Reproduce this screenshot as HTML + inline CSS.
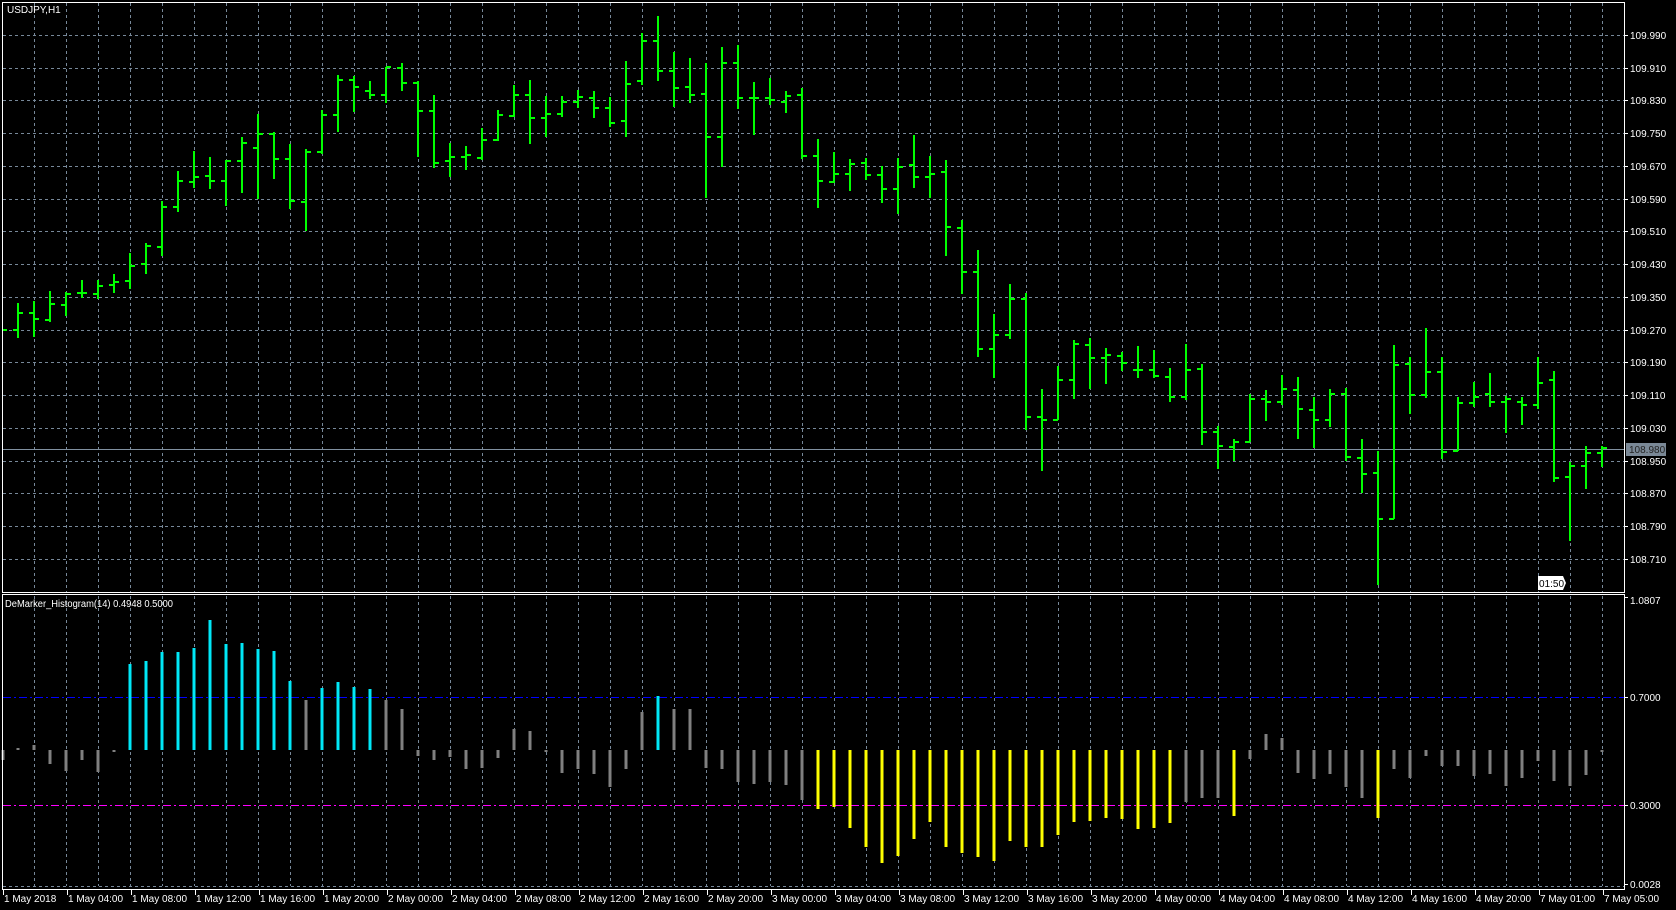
<!DOCTYPE html>
<html><head><meta charset="utf-8"><style>
html,body{margin:0;padding:0;background:#000;width:1676px;height:910px;overflow:hidden}
svg{display:block}
text{font-family:"Liberation Sans",sans-serif;font-size:10px;fill:#fff}
</style></head><body>
<svg width="1676" height="910" viewBox="0 0 1676 910" xmlns="http://www.w3.org/2000/svg">
<defs>
<pattern id="vg" x="0" y="0" width="32" height="910" patternUnits="userSpaceOnUse"></pattern>
</defs>
<!-- vertical grid -->
<g stroke="#778899" stroke-width="1" stroke-dasharray="3 3" shape-rendering="crispEdges">
<path d="M34.5 3V592M66.5 3V592M98.5 3V592M130.5 3V592M162.5 3V592M194.5 3V592M226.5 3V592M258.5 3V592M290.5 3V592M322.5 3V592M354.5 3V592M386.5 3V592M418.5 3V592M450.5 3V592M482.5 3V592M514.5 3V592M546.5 3V592M578.5 3V592M610.5 3V592M642.5 3V592M674.5 3V592M706.5 3V592M738.5 3V592M770.5 3V592M802.5 3V592M834.5 3V592M866.5 3V592M898.5 3V592M930.5 3V592M962.5 3V592M994.5 3V592M1026.5 3V592M1058.5 3V592M1090.5 3V592M1122.5 3V592M1154.5 3V592M1186.5 3V592M1218.5 3V592M1250.5 3V592M1282.5 3V592M1314.5 3V592M1346.5 3V592M1378.5 3V592M1410.5 3V592M1442.5 3V592M1474.5 3V592M1506.5 3V592M1538.5 3V592M1570.5 3V592M1602.5 3V592"/>
<path d="M34.5 596V886M66.5 596V886M98.5 596V886M130.5 596V886M162.5 596V886M194.5 596V886M226.5 596V886M258.5 596V886M290.5 596V886M322.5 596V886M354.5 596V886M386.5 596V886M418.5 596V886M450.5 596V886M482.5 596V886M514.5 596V886M546.5 596V886M578.5 596V886M610.5 596V886M642.5 596V886M674.5 596V886M706.5 596V886M738.5 596V886M770.5 596V886M802.5 596V886M834.5 596V886M866.5 596V886M898.5 596V886M930.5 596V886M962.5 596V886M994.5 596V886M1026.5 596V886M1058.5 596V886M1090.5 596V886M1122.5 596V886M1154.5 596V886M1186.5 596V886M1218.5 596V886M1250.5 596V886M1282.5 596V886M1314.5 596V886M1346.5 596V886M1378.5 596V886M1410.5 596V886M1442.5 596V886M1474.5 596V886M1506.5 596V886M1538.5 596V886M1570.5 596V886M1602.5 596V886"/>
<path d="M3 35.5H1624M3 68.5H1624M3 100.5H1624M3 133.5H1624M3 166.5H1624M3 199.5H1624M3 231.5H1624M3 264.5H1624M3 297.5H1624M3 330.5H1624M3 362.5H1624M3 395.5H1624M3 428.5H1624M3 461.5H1624M3 493.5H1624M3 526.5H1624M3 559.5H1624M3 886.5H1624"/>
</g>
<!-- current price line -->
<path d="M3 449.5H1624" stroke="#8090a0" stroke-width="1" shape-rendering="crispEdges"/>
<!-- OHLC bars -->
<g stroke="#00ff00" stroke-width="2" fill="none" shape-rendering="crispEdges">
<path d="M2 330H7
M18 303V338M13 330H18M18 313H23
M34 301V337M29 313H34M34 319H39
M50 291V322M45 320H50M50 304H55
M66 292V316M61 305H66M66 294H71
M82 280V298M77 293H82M82 293H87
M98 280V299M93 294H98M98 286H103
M114 274V293M109 285H114M114 282H119
M130 253V289M125 281H130M130 266H135
M146 243V274M141 264H146M146 246H151
M162 201V256M157 247H162M162 207H167
M178 171V212M173 207H178M178 181H183
M194 151V188M189 182H194M194 177H199
M210 157V189M205 176H210M210 181H215
M226 160V206M221 181H226M226 161H231
M242 137V193M237 161H242M242 143H247
M258 114V199M253 148H258M258 134H263
M274 132V179M269 134H274M274 159H279
M290 144V209M285 159H290M290 201H295
M306 149V231M301 202H306M306 152H311
M322 110V154M317 152H322M322 115H327
M338 75V132M333 115H338M338 80H343
M354 76V112M349 80H354M354 87H359
M370 81V99M365 91H370M370 95H375
M386 67V103M381 95H386M386 67H391
M402 63V91M397 68H402M402 83H407
M418 81V157M413 83H418M418 111H423
M434 95V168M429 111H434M434 163H439
M450 143V177M445 161H450M450 157H455
M466 146V170M461 157H466M466 155H471
M482 128V160M477 158H482M482 140H487
M498 110V141M493 140H498M498 115H503
M514 85V117M509 116H514M514 95H519
M530 80V144M525 95H530M530 118H535
M546 96V137M541 118H546M546 114H551
M562 96V117M557 114H562M562 102H567
M578 90V108M573 102H578M578 97H583
M594 91V118M589 98H594M594 108H599
M610 97V127M605 108H610M610 123H615
M626 61V137M621 121H626M626 84H631
M642 33V85M637 81H642M642 41H647
M658 16V81M653 41H658M658 71H663
M674 52V107M669 71H674M674 88H679
M690 58V103M685 87H690M690 95H695
M706 63V198M701 94H706M706 137H711
M722 47V167M717 137H722M722 63H727
M738 45V109M733 63H738M738 98H743
M754 82V135M749 98H754M754 98H759
M770 78V105M765 98H770M770 100H775
M786 91V113M781 102H786M786 96H791
M802 88V159M797 95H802M802 156H807
M818 139V208M813 156H818M818 181H823
M834 152V183M829 182H834M834 174H839
M850 159V191M845 174H850M850 164H855
M866 158V180M861 163H866M866 175H871
M882 166V203M877 175H882M882 189H887
M898 158V214M893 189H898M898 167H903
M914 135V188M909 165H914M914 177H919
M930 156V198M925 177H930M930 174H935
M946 160V256M941 172H946M946 227H951
M962 220V294M957 228H962M962 272H967
M978 250V357M973 272H978M978 349H983
M994 314V378M989 349H994M994 335H999
M1010 284V339M1005 335H1010M1010 299H1015
M1026 293V430M1021 299H1026M1026 417H1031
M1042 389V471M1037 417H1042M1042 420H1047
M1058 366V420M1053 420H1058M1058 380H1063
M1074 340V399M1069 380H1074M1074 344H1079
M1090 338V389M1085 345H1090M1090 358H1095
M1106 348V384M1101 358H1106M1106 355H1111
M1122 352V371M1117 356H1122M1122 363H1127
M1138 346V378M1133 370H1138M1138 370H1143
M1154 350V378M1149 370H1154M1154 376H1159
M1170 368V402M1165 377H1170M1170 397H1175
M1186 344V400M1181 397H1186M1186 370H1191
M1202 364V445M1197 369H1202M1202 432H1207
M1218 426V469M1213 432H1218M1218 446H1223
M1234 439V461M1229 447H1234M1234 442H1239
M1250 394V442M1245 442H1250M1250 399H1255
M1266 390V421M1261 399H1266M1266 402H1271
M1282 375V405M1277 402H1282M1282 389H1287
M1298 377V439M1293 390H1298M1298 409H1303
M1314 397V448M1309 410H1314M1314 420H1319
M1330 389V427M1325 420H1330M1330 394H1335
M1346 388V461M1341 394H1346M1346 457H1351
M1362 439V493M1357 458H1362M1362 474H1367
M1378 451V585M1373 473H1378M1378 519H1383
M1394 345V519M1389 519H1394M1394 365H1399
M1410 357V414M1405 364H1410M1410 395H1415
M1426 328V398M1421 395H1426M1426 372H1431
M1442 357V459M1437 372H1442M1442 452H1447
M1458 397V451M1453 451H1458M1458 403H1463
M1474 382V407M1469 403H1474M1474 397H1479
M1490 373V407M1485 394H1490M1490 402H1495
M1506 396V433M1501 402H1506M1506 399H1511
M1522 397V425M1517 402H1522M1522 405H1527
M1538 357V409M1533 405H1538M1538 383H1543
M1554 371V482M1549 380H1554M1554 478H1559
M1570 462V541M1565 477H1570M1570 466H1575
M1586 446V489M1581 466H1586M1586 453H1591
M1602 446V467M1597 453H1602M1602 448H1607"/>
</g>
<!-- levels -->
<path d="M3 697.5H1624" stroke="#0000ff" stroke-width="1" stroke-dasharray="8 3 2 3" shape-rendering="crispEdges"/>
<path d="M3 805.5H1624" stroke="#ff00ff" stroke-width="1" stroke-dasharray="8 3 2 3" shape-rendering="crispEdges"/>
<!-- histogram -->
<g stroke-width="3" fill="none" shape-rendering="crispEdges">
<path stroke="#808080" d="M3 750V760M18 750V748M34 750V745M50 750V764M66 750V771M82 750V760M98 750V772M114 750V752M306 750V700M386 750V700M402 750V709M418 750V756M434 750V760M450 750V757M466 750V769M482 750V768M498 750V758M514 750V729M530 750V731M546 750V752M562 750V773M578 750V769M594 750V774M610 750V787M626 750V769M642 750V712M674 750V709M690 750V709M706 750V768M722 750V769M738 750V782M754 750V784M770 750V782M786 750V785M802 750V800M1186 750V802M1202 750V798M1218 750V798M1250 750V759M1266 750V734M1282 750V738M1298 750V773M1314 750V779M1330 750V774M1346 750V787M1362 750V798M1394 750V769M1410 750V778M1426 750V756M1442 750V766M1458 750V766M1474 750V776M1490 750V774M1506 750V786M1522 750V778M1538 750V761M1554 750V781M1570 750V786M1586 750V775M1602 750V752"/>
<path stroke="#00e8f8" d="M130 750V664M146 750V661M162 750V652M178 750V652M194 750V648M210 750V620M226 750V644M242 750V643M258 750V649M274 750V651M290 750V681M322 750V688M338 750V682M354 750V687M370 750V689M658 750V696"/>
<path stroke="#ffff00" d="M818 750V809M834 750V807M850 750V828M866 750V847M882 750V863M898 750V856M914 750V839M930 750V822M946 750V847M962 750V853M978 750V857M994 750V861M1010 750V841M1026 750V847M1042 750V847M1058 750V835M1074 750V822M1090 750V821M1106 750V818M1122 750V819M1138 750V829M1154 750V828M1170 750V823M1234 750V816M1378 750V818"/>
</g>
<!-- borders -->
<g stroke="#ffffff" stroke-width="1" fill="none" shape-rendering="crispEdges">
<path d="M2.5 2.5H1624.5V592.5H2.5Z"/>
<path d="M2.5 594.5H1624.5V889.5H2.5Z"/>
<path d="M1624 35.5h4M1624 68.5h4M1624 100.5h4M1624 133.5h4M1624 166.5h4M1624 199.5h4M1624 231.5h4M1624 264.5h4M1624 297.5h4M1624 330.5h4M1624 362.5h4M1624 395.5h4M1624 428.5h4M1624 461.5h4M1624 493.5h4M1624 526.5h4M1624 559.5h4M1624 597.5h4M1624 697.5h4M1624 805.5h4M1624 884.5h4"/>
<path d="M3.5 889V895M67.5 889V895M131.5 889V895M195.5 889V895M259.5 889V895M323.5 889V895M387.5 889V895M451.5 889V895M515.5 889V895M579.5 889V895M643.5 889V895M707.5 889V895M771.5 889V895M835.5 889V895M899.5 889V895M963.5 889V895M1027.5 889V895M1091.5 889V895M1155.5 889V895M1219.5 889V895M1283.5 889V895M1347.5 889V895M1411.5 889V895M1475.5 889V895M1539.5 889V895M1603.5 889V895"/>
</g>
<text x="7" y="13">USDJPY,H1</text>
<text x="5" y="607" textLength="168" lengthAdjust="spacingAndGlyphs">DeMarker_Histogram(14) 0.4948 0.5000</text>
<!-- price labels -->
<g>
<text x="1630" y="39">109.990</text>
<text x="1630" y="72">109.910</text>
<text x="1630" y="104">109.830</text>
<text x="1630" y="137">109.750</text>
<text x="1630" y="170">109.670</text>
<text x="1630" y="203">109.590</text>
<text x="1630" y="235">109.510</text>
<text x="1630" y="268">109.430</text>
<text x="1630" y="301">109.350</text>
<text x="1630" y="334">109.270</text>
<text x="1630" y="366">109.190</text>
<text x="1630" y="399">109.110</text>
<text x="1630" y="432">109.030</text>
<text x="1630" y="465">108.950</text>
<text x="1630" y="497">108.870</text>
<text x="1630" y="530">108.790</text>
<text x="1630" y="563">108.710</text>
<rect x="1626" y="443" width="40" height="13" fill="#7a8896"/>
<text x="1629" y="453" style="fill:#222">108.980</text>
<text x="1630" y="604">1.0807</text>
<text x="1630" y="701">0.7000</text>
<text x="1630" y="809">0.3000</text>
<text x="1630" y="888">0.0028</text>
</g>
<!-- timer -->
<path d="M1538 576H1563L1566 583L1563 590H1538Z" fill="#fff"/>
<text x="1539" y="587" style="fill:#000">01:50</text>
<!-- time labels -->
<g>
<text x="4" y="902">1 May 2018</text>
<text x="68" y="902">1 May 04:00</text>
<text x="132" y="902">1 May 08:00</text>
<text x="196" y="902">1 May 12:00</text>
<text x="260" y="902">1 May 16:00</text>
<text x="324" y="902">1 May 20:00</text>
<text x="388" y="902">2 May 00:00</text>
<text x="452" y="902">2 May 04:00</text>
<text x="516" y="902">2 May 08:00</text>
<text x="580" y="902">2 May 12:00</text>
<text x="644" y="902">2 May 16:00</text>
<text x="708" y="902">2 May 20:00</text>
<text x="772" y="902">3 May 00:00</text>
<text x="836" y="902">3 May 04:00</text>
<text x="900" y="902">3 May 08:00</text>
<text x="964" y="902">3 May 12:00</text>
<text x="1028" y="902">3 May 16:00</text>
<text x="1092" y="902">3 May 20:00</text>
<text x="1156" y="902">4 May 00:00</text>
<text x="1220" y="902">4 May 04:00</text>
<text x="1284" y="902">4 May 08:00</text>
<text x="1348" y="902">4 May 12:00</text>
<text x="1412" y="902">4 May 16:00</text>
<text x="1476" y="902">4 May 20:00</text>
<text x="1540" y="902">7 May 01:00</text>
<text x="1604" y="902">7 May 05:00</text>
</g>
</svg>
</body></html>
